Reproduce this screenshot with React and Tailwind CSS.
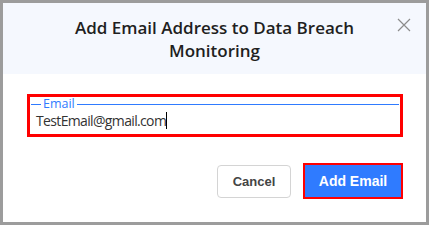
import React from "react";

const CloseIcon = () => (
  <svg width="14" height="14" viewBox="0 0 14 14" fill="none">
    <path d="M1 1L13 13M13 1L1 13" stroke="#8c8c8c" strokeWidth="1.2" />
  </svg>
);

export default function App() {
  return (
    <div className="w-[429px] h-[225px] border-[3px] border-[#9c9c9c] bg-white flex flex-col">
      <div className="relative h-[71px] bg-[#f5f8fe] flex items-center justify-center">
        <h2 className="max-w-[300px] pt-[1px] text-center text-[17px] leading-[23px] font-semibold text-[#1f1f1f] font-['Open_Sans',sans-serif]">
          Add Email Address to Data Breach Monitoring
        </h2>
        <button className="absolute top-[15px] right-[15px]">
          <CloseIcon />
        </button>
      </div>

      <div className="px-[24px] pr-[23px] pt-[20px]">
        <div className="h-[43px] border-[3px] border-[#ff0000]">
          <fieldset className="border-0 border-t border-[#2f7bff] mx-[1px] mt-[1px] px-[5px]">
            <legend className="ml-[5px] px-[2px] text-[12.5px] leading-[12px] text-[#2f7bff] font-['Open_Sans',sans-serif]">
              Email
            </legend>
            <div className="flex items-center mt-[2px] text-[14px] leading-[17px] tracking-[-0.65px] text-[#333] font-['Open_Sans',sans-serif]">
              <span>TestEmail@gmail.com</span>
              <span className="w-px h-[17px] bg-black" />
            </div>
          </fieldset>
        </div>
      </div>

      <div className="flex justify-end gap-[12px] pr-[23px] pt-[26px] font-['Liberation_Sans',Arial,sans-serif]">
        <button className="w-[74px] h-[33px] mt-[2px] rounded-[4px] border border-[#d4d4d4] bg-white text-[13px] font-bold text-[#444]">
          Cancel
        </button>
        <button className="w-[100px] h-[36px] border-[2px] border-[#ff0000] bg-[#2f7bff] text-[14px] font-bold text-white">
          Add Email
        </button>
      </div>
    </div>
  );
}
